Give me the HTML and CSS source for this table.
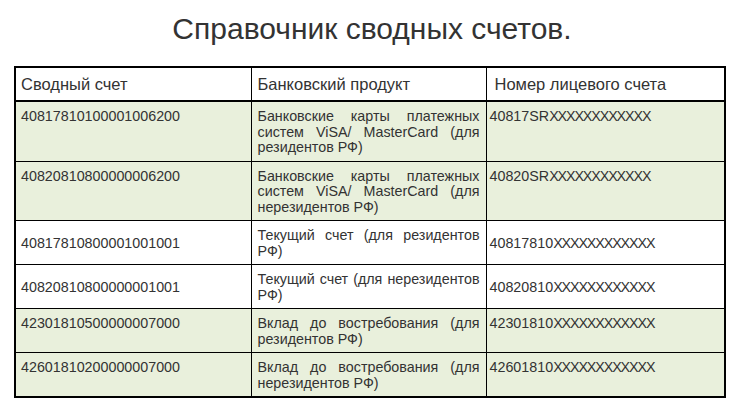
FILE: index.html
```html
<!DOCTYPE html>
<html lang="ru">
<head>
<meta charset="utf-8">
<title>Справочник сводных счетов</title>
<link rel="stylesheet" href="styles.css">
</head>
<body>
<h1 class="title">Справочник сводных счетов.</h1>
<table class="accounts">
  <colgroup>
    <col class="c1"><col class="c2"><col class="c3">
  </colgroup>
  <thead>
    <tr><th>Сводный счет</th><th>Банковский продукт</th><th>Номер лицевого счета</th></tr>
  </thead>
  <tbody>
    <tr class="green">
      <td>40817810100001006200</td>
      <td class="prod">Банковские карты платежных систем ViSA/ MasterCard (для резидентов РФ)</td>
      <td>40817SR<span class="mask">XXXXXXXXXXXX</span></td>
    </tr>
    <tr class="green">
      <td>40820810800000006200</td>
      <td class="prod">Банковские карты платежных систем ViSA/ MasterCard (для нерезидентов РФ)</td>
      <td>40820SR<span class="mask">XXXXXXXXXXXX</span></td>
    </tr>
    <tr class="mid">
      <td>40817810800001001001</td>
      <td class="prod">Текущий счет (для резидентов РФ)</td>
      <td>40817810<span class="mask">XXXXXXXXXXXX</span></td>
    </tr>
    <tr class="mid">
      <td>40820810800000001001</td>
      <td class="prod">Текущий счет (для нерезидентов РФ)</td>
      <td>40820810<span class="mask">XXXXXXXXXXXX</span></td>
    </tr>
    <tr class="green">
      <td>42301810500000007000</td>
      <td class="prod">Вклад до востребования (для резидентов РФ)</td>
      <td>42301810<span class="mask">XXXXXXXXXXXX</span></td>
    </tr>
    <tr class="green">
      <td>42601810200000007000</td>
      <td class="prod">Вклад до востребования (для нерезидентов РФ)</td>
      <td>42601810<span class="mask">XXXXXXXXXXXX</span></td>
    </tr>
  </tbody>
</table>
</body>
</html>
```
FILE: styles.css
```css
html, body {
  margin: 0;
  padding: 0;
  background: #ffffff;
}
body {
  font-family: "Liberation Sans", Arial, sans-serif;
  color: #333333;
}
.title {
  margin: 10px 0 0 0;
  height: 56px;
  font-size: 30px;
  font-weight: normal;
  line-height: 38px;
  text-align: center;
  color: #333333;
}
.accounts {
  margin-left: 14px;
  width: 710px;
  table-layout: fixed;
  border-collapse: collapse;
  border: 2px solid #000;
}
.c1 { width: 236px; }
.c2 { width: 235px; }
.c3 { width: 239px; }
.accounts th {
  font-weight: normal;
  font-size: 16.5px;
  text-align: left;
  height: 32px;
  padding: 0 6px;
  border: 1px solid #000;
  border-bottom-width: 2px;
  vertical-align: middle;
}
.accounts th:first-child {
  padding-left: 5px;
}
.accounts th:last-child {
  padding-left: 8px;
}
.accounts td {
  font-size: 14.3px;
  line-height: 15.5px;
  padding: 7px 6px 5px 6px;
  border: 1px solid #000;
  vertical-align: top;
}
.accounts td:first-child {
  padding-left: 5px;
}
.accounts td:last-child {
  padding-left: 3px;
}
.accounts td.prod {
  text-align: justify;
}
.mask {
  letter-spacing: -1.1px;
}
.green td {
  background: #e9f0dc;
}
.mid td {
  vertical-align: middle;
}
```
